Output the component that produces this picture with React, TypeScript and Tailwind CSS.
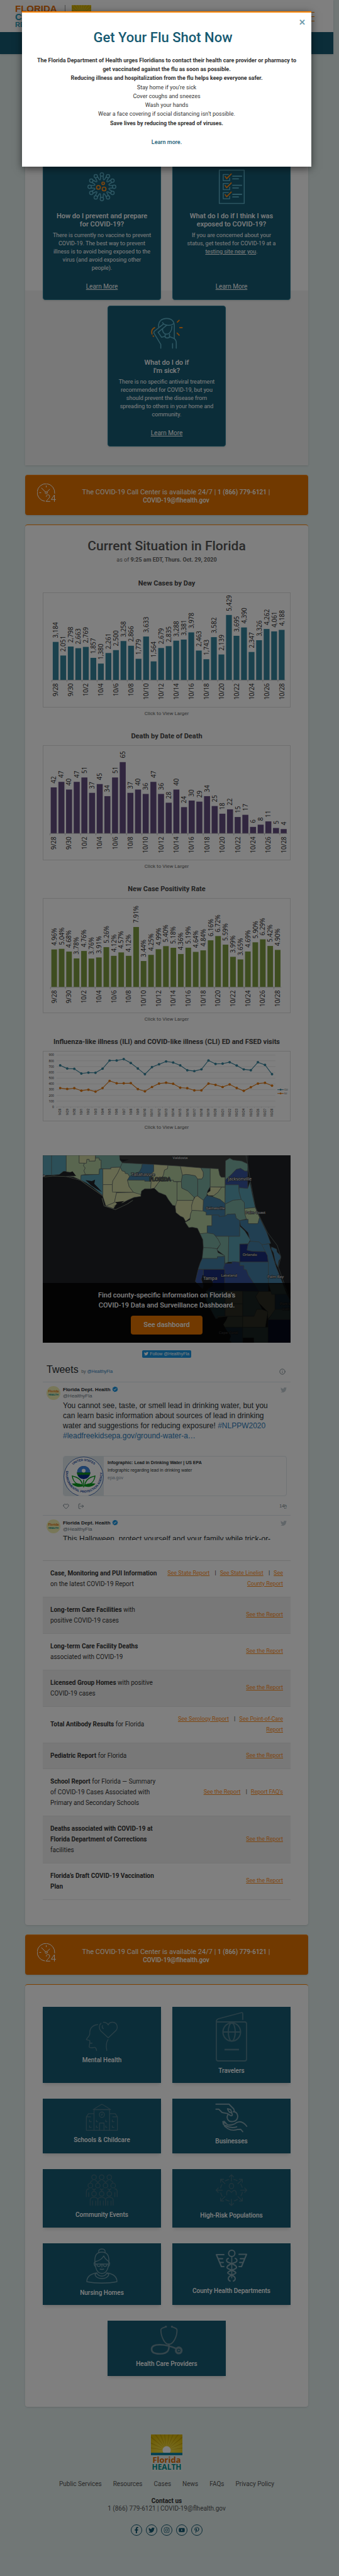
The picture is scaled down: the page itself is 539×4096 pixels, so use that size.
import React from 'react';
import { FaFacebookF, FaTwitter, FaInstagram, FaYoutube, FaPinterestP } from 'react-icons/fa';
import { MdVerified } from 'react-icons/md';
import { Heart, Info, LogOut } from 'lucide-react';

type IconProps = { box: string; className: string; children: React.ReactNode };

function Drawing({ box, className, children }: IconProps) {
  return (
    <svg
      viewBox={box}
      preserveAspectRatio="none"
      fill="none"
      stroke="currentColor"
      strokeLinecap="round"
      strokeLinejoin="round"
      aria-hidden="true"
      className={`block shrink-0 overflow-visible [&_*]:[vector-effect:non-scaling-stroke] ${className}`}
    >
      {children}
    </svg>
  );
}

function polar(angle: number, r: number) {
  const a = (angle * Math.PI) / 180;
  return `${(23 + r * Math.sin(a)).toFixed(2)} ${(23 - r * Math.cos(a)).toFixed(2)}`;
}

function VirusIcon() {
  const spokes = Array.from({ length: 12 }, (_, i) => i * 30);
  return (
    <Drawing box="0 0 46 46" className="h-[46px] w-[46px] text-[#5cb0c8]">
      {spokes.map((a) => {
        const c = polar(a, 19.5).split(' ');
        return (
          <g key={a} strokeWidth="1.5">
            <circle cx={c[0]} cy={c[1]} r="2.7" />
            <path d={`M${polar(a + 7, 17)} L${polar(a + 10, 12.5)} Q${polar(a + 15, 10.5)} ${polar(a + 20, 12.5)} L${polar(a + 23, 17)}`} />
          </g>
        );
      })}
      <g stroke="#ff8c1a" strokeWidth="1.7">
        <circle cx="25" cy="17.5" r="2" />
        <circle cx="17.5" cy="24" r="3" />
        <circle cx="26.5" cy="26.5" r="3" />
      </g>
    </Drawing>
  );
}

function ChecklistIcon() {
  return (
    <Drawing box="1012 60 119 270" className="h-[54px] w-[41px] text-[#5cb0c8]">
      <rect x="1014" y="63" width="115" height="264" strokeWidth="1.5" />
      {[0, 72, 144].map((d) => (
        <g key={d} strokeWidth="1.5">
          <path d={`M1056 ${97 + d}H1032V${146 + d}H1062V${126 + d}`} />
          <path d={`M1076 ${111 + d}H1117M1076 ${132 + d}H1102`} strokeWidth="1.8" />
          <path d={`M1041 ${113 + d}L1048 ${130 + d}L1069 ${93 + d}`} stroke="#ff8c1a" strokeWidth="1.8" />
        </g>
      ))}
    </Drawing>
  );
}

function SickIcon() {
  return (
    <Drawing box="699 1245 144 242" className="h-[48px] w-[50px] text-[#5cb0c8]">
      <g strokeWidth="1.6">
        <path d="M734 1315C732 1270 748 1247 771 1247C796 1247 807 1275 806 1310V1408" />
        <path d="M752 1280C760 1305 790 1310 803 1288" />
        <path d="M756 1292L714 1350L712 1362L744 1455V1486" />
        <path d="M772 1300L732 1358L748 1398L764 1390" />
        <path d="M752 1330C750 1390 795 1390 795 1310" />
        <path d="M764 1372V1394C764 1406 784 1406 784 1394V1372" />
        <path d="M784 1392L806 1408C813 1418 815 1425 815 1440V1486M798 1448V1485" />
      </g>
      <path d="M716 1320C702 1332 700 1350 704 1372M709 1387L711 1390M820 1276L828 1262M831 1321H842M819 1364L828 1381" stroke="#ff8c1a" strokeWidth="1.9" />
    </Drawing>
  );
}

function ClockIcon() {
  return (
    <svg viewBox="0 0 30 29" fill="none" stroke="#fff" strokeWidth="1" strokeLinecap="round" aria-hidden="true" className="block h-[29px] w-[30px] shrink-0">
      <path d="M28 15.5A14 14 0 1 0 12 28" />
      <path d="M14.5 3.5V5.5M4 14.5H6M7 7L13.4 13.4M20 9L15.6 13.3" />
      <circle cx="14.5" cy="14.5" r="1.7" />
      <path d="M14.5 20.5C14.5 16.8 20 16.8 20 20.3C20 23 16 25.5 14.3 28.3H20.5M27.5 28.5V18L22.5 25.3H29.5" />
    </svg>
  );
}

function MindIcon() {
  return (
    <Drawing box="397 20 148 172" className="h-[46px] w-[50px] text-[#527f8e]">
      <path strokeWidth="1.4" d="M451 36C425 40 413 60 414 90C414 105 398 118 398 124C400 130 411 126 414 132V146H425M414 146L411 168C413 178 428 172 438 171C444 174 445 182 446 190M500 125C488 145 491 170 494 190" />
      <path strokeWidth="1.4" d="M467 28C457 38 456 60 465 72L501 114L538 70C547 55 545 25 523 22C510 21 503 30 501 38C497 28 488 22 478 22M474 42C471 48 472 56 478 60" />
    </Drawing>
  );
}

function PassportIcon() {
  return (
    <Drawing box="0 0 50 79" className="h-[79px] w-[50px] text-[#527f8e]">
      <path strokeWidth="1.8" d="M43 12V3C43 1 42 1 40 1.5L4 11C2 12 1 13 1 15V75C1 77 2 78 4 78H46C48 78 49 77 49 75V19C49 17 48 16 46 16H1" />
      <g strokeWidth="2">
        <ellipse cx="25.5" cy="32" rx="14" ry="14.5" />
        <ellipse cx="25.5" cy="32" rx="5.5" ry="14.5" />
        <path d="M12 32H39" />
      </g>
      <path strokeWidth="2.6" strokeLinecap="butt" d="M14 60H37" />
    </Drawing>
  );
}

function SchoolIcon() {
  return (
    <Drawing box="397 512 148 158" className="h-[42px] w-[50px] text-[#4b7585]">
      <g strokeWidth="1.3">
        <path d="M398 668H544V587L534 568H508M398 668V587L408 568H433M398 587H418M544 587H522" />
        <path d="M434 668V544H507V668M430 543L466 515Q471 511 476 515L512 543Z" />
        <path d="M460 668V624H481V668" />
        <ellipse cx="471" cy="574" rx="12" ry="16" />
        <path d="M472 568V576H468M413 606V616H421M413 640V650H421M445 608V616H451M445 640V650H451M489 606V616H495M489 640V650H495M520 606V616H528M520 640V650H528" />
      </g>
    </Drawing>
  );
}

function BusinessIcon() {
  return (
    <Drawing box="998 504 147 170" className="h-[45px] w-[50px] text-[#7fa0ac]">
      <g strokeWidth="1.9">
        <path d="M999 507H1060L1082 535L1086 552M999 537H1012L1028 557L1052 563L1068 576C1078 578 1077 566 1070 558" />
        <path d="M1053 534L1068 540L1073 558C1060 560 1056 548 1053 534Z" />
        <path d="M1080 552C1098 552 1104 575 1099 592C1092 615 1064 618 1055 600C1051 592 1051 580 1054 572" />
        <path d="M1031 612L1040 640L1055 654C1068 664 1085 665 1100 659L1115 658L1124 672M1031 612L1038 610L1052 630C1065 636 1085 630 1095 618C1110 608 1128 614 1143 640M1042 634C1060 648 1080 650 1096 643M1034 628C1030 618 1034 614 1044 622" />
      </g>
    </Drawing>
  );
}

function CrowdIcon() {
  return (
    <Drawing box="397 930 148 183" className="h-[49px] w-[50px] text-[#3f6a7a]">
      <g strokeWidth="1.4">
        {[434, 470, 506].map((x) => (
          <g key={x}>
            <ellipse cx={x} cy="945" rx="11" ry="14" />
            <ellipse cx={x} cy="1043" rx="11" ry="14" />
            <path d={`M${x - 18} 1111V1080Q${x - 18} 1064 ${x} 1064Q${x + 18} 1064 ${x + 18} 1080V1111M${x - 7} 1086V1111M${x + 8} 1086V1111`} />
            <path d={`M${x - 17} 978Q${x - 15} 965 ${x - 6} 965M${x + 17} 978Q${x + 15} 965 ${x + 6} 965M${x - 8} 1014Q${x} 1016 ${x} 1026Q${x} 1016 ${x + 8} 1014`} />
          </g>
        ))}
        {[417, 452, 488, 524].map((x) => (
          <ellipse key={x} cx={x} cy="994" rx="11" ry="14" />
        ))}
        <path d="M410 1014Q398 1014 398 1030V1060M409 1036V1060M532 1014Q543 1014 543 1030V1060M532 1036V1060" />
      </g>
    </Drawing>
  );
}

function RiskIcon() {
  return (
    <svg viewBox="0 0 50 51" fill="none" stroke="currentColor" strokeWidth="1.4" strokeLinecap="round" strokeLinejoin="round" aria-hidden="true" className="block h-[51px] w-[50px] shrink-0 text-[#3f6a7a]">
      {[0, 45, 90, 135, 180, 225, 270, 315].map((a) => (
        <g key={a} transform={`rotate(${a} 25 25.5)`}>
          <path d="M25 11V1M21.5 4.5L25 1L28.5 4.5" />
          <path d="M28.5 8.2A17.6 17.6 0 0 1 34 10.4" />
        </g>
      ))}
      <ellipse cx="25" cy="19" rx="3.6" ry="4.2" />
      <path d="M17.5 33V30C17.5 27 19 25.8 21.5 26L25 29L28.5 26C31 25.8 32.5 27 32.5 30V33" />
    </svg>
  );
}

function ElderIcon() {
  return (
    <Drawing box="0 0 50 56" className="h-[56px] w-[50px] text-[#6d97a5]">
      <g strokeWidth="1.4">
        <path d="M20 7C19 3 21 1 25 1C29 1 31 3 30 7" />
        <path d="M14 23C13 12 16 6 25 6C34 6 37 12 36 23C35 34 31 40 25 40C19 40 15 34 14 23" />
        <path d="M15 21C20 20 25 17 28 12C30 17 33 19 36 21" />
        <path d="M14 22C12 22 12 27 15 29M36 22C38 22 38 27 35 29M15 25H35M17 25C17 30 23 30 23 25M27 25C27 30 33 30 33 25M25 25V30M22 33Q25 34 28 33" />
        <path d="M17 39C5 41 1 46 1 53C15 56 35 56 49 53C49 46 45 41 33 39M17 39L14 42C17 50 33 50 36 42L33 39M17 39C20 46 30 46 33 39" />
      </g>
    </Drawing>
  );
}

function CaduceusIcon() {
  return (
    <Drawing box="0 0 50 51" className="h-[51px] w-[50px] text-[#7fa0ac]">
      <g strokeWidth="2">
        <circle cx="25.5" cy="6" r="5" />
        <path d="M25.5 11V45" strokeWidth="1.6" />
        <path d="M13 8H1L9 27H13M4 14.5H11M6.5 20.5H12M37 7.5H49L41 27H37M46 14.5H39M43.5 20.5H38" />
        <path d="M20 14C17 15 16 18 19 20C24 22 34 24 33 29C31 32 20 33 19 37C20 40 31 40 31 46Q31 49 28 50M31 14C34 15 35 18 32 20C27 22 17 24 18 29C20 32 31 33 32 37C31 40 20 40 20 46Q20 49 23 50" />
      </g>
    </Drawing>
  );
}

function StethoscopeIcon() {
  return (
    <Drawing box="699 252 146 152" className="h-[46px] w-[50px] text-[#6a8c98]">
      <path strokeWidth="1.8" d="M768 258C752 264 745 266 745 275C746 310 762 350 782 350C803 350 820 310 820 275C820 266 812 264 797 258" />
      <path strokeWidth="3" d="M768 257H769M796 257H797" />
      <path strokeWidth="2.6" d="M782 350C785 375 782 400 740 400C712 400 702 390 702 375C702 355 722 352 740 352C770 352 795 362 816 372" />
      <ellipse cx="828" cy="382" rx="13" ry="15" strokeWidth="3.4" />
      <ellipse cx="828" cy="382" rx="3" ry="4" fill="currentColor" />
    </Drawing>
  );
}

function HealthLogo({ className }: { className: string }) {
  return (
    <svg viewBox="0 0 50 59" role="img" aria-label="Florida Health" className={className}>
      <defs>
        <clipPath id="sky">
          <rect width="50" height="29" />
        </clipPath>
        <radialGradient id="sun" cx="50%" cy="85%" r="90%">
          <stop offset="0" stopColor="#f5e04a" />
          <stop offset="1" stopColor="#d8b400" />
        </radialGradient>
      </defs>
      <rect width="50" height="59" fill="#f3f6ee" opacity="0.35" />
      <rect width="50" height="29" fill="url(#sun)" />
      <g clipPath="url(#sky)">
        {[-82, -66, -50, -36, -22, -8, 8, 22, 36, 50, 66, 82].map((a) => (
          <path key={a} d="M25 24L24 -20H26.5Z" fill="#b08d00" opacity="0.55" transform={`rotate(${a} 25 25)`} />
        ))}
        <circle cx="25" cy="25" r="6.5" fill="#fff" />
      </g>
      <rect y="29" width="50" height="4" fill="#1187a5" />
      <text x="25" y="44.5" textAnchor="middle" fontFamily="Open Sans, sans-serif" fontWeight="700" fontSize="13" fill="#e06a00">Florida</text>
      <text x="25" y="56" textAnchor="middle" fontFamily="Open Sans, sans-serif" fontWeight="700" fontSize="12" fill="#008c8c">HEALTH</text>
    </svg>
  );
}

const dates = ['9/28', '9/30', '10/2', '10/4', '10/6', '10/8', '10/10', '10/12', '10/14', '10/16', '10/18', '10/20', '10/22', '10/24', '10/26', '10/28'];

type BarChartProps = {
  label: string;
  values: number[];
  format: (v: number) => string;
  color: string;
  first: number;
  pitch: number;
  barWidth: number;
  base: number;
  unit: number;
};

function BarChart({ label, values, format, color, first, pitch, barWidth, base, unit }: BarChartProps) {
  const left = first - pitch / 2;
  return (
    <svg viewBox="0 0 394 182" role="img" aria-label={label} className="block h-auto w-full border border-[#dcdcdc]" fontFamily="Open Sans, sans-serif" fontSize="10" fill="#222">
      {values.map((v, i) => {
        const x = first + i * pitch;
        const h = v * unit;
        return (
          <g key={i}>
            <rect x={x - barWidth / 2} y={base - h} width={barWidth} height={h} fill={color} />
            <text transform={`translate(${x + 3.7} ${base - h - 6.2}) rotate(-90)`}>{format(v)}</text>
          </g>
        );
      })}
      <path d={`M${left} ${base}H${left + pitch * 31}`} stroke="#c4c4c4" strokeWidth="0.8" />
      {dates.map((d, i) => (
        <g key={d}>
          <path d={`M${left + i * 2 * pitch} ${base}v3`} stroke="#b8b8b8" strokeWidth="0.8" />
          <text textAnchor="end" transform={`translate(${first + i * 2 * pitch + 3.7} ${base + 5}) rotate(-90)`}>{d}</text>
        </g>
      ))}
    </svg>
  );
}

const cases = [3184, 2051, 2798, 2663, 2769, 1857, 1380, 2261, 2500, 3258, 2866, 1779, 3633, 1564, 2679, 2835, 3288, 3381, 3978, 2463, 1743, 3582, 2139, 5429, 3695, 4390, 2347, 3326, 4262, 4061, 4188];
const deaths = [42, 47, 40, 47, 51, 37, 45, 34, 51, 65, 37, 40, 36, 47, 36, 28, 40, 24, 30, 29, 34, 25, 18, 22, 15, 17, 6, 8, 11, 5, 4];
const positivity = [4.96, 5.04, 4.68, 3.78, 4.76, 3.76, 3.91, 5.26, 4.12, 4.57, 4.12, 7.91, 3.44, 4.25, 4.99, 5.4, 5.18, 4.36, 5.19, 4.64, 4.84, 6.16, 6.72, 5.59, 3.99, 3.65, 4.69, 5.9, 6.29, 5.42, 4.9];
const cli = [722, 666, 661, 580, 596, 594, 664, 805, 807, 831, 763, 668, 568, 691, 740, 789, 770, 722, 638, 622, 652, 807, 747, 752, 777, 719, 652, 638, 775, 731, 568];
const ili = [327, 311, 325, 283, 299, 265, 327, 452, 411, 411, 413, 309, 271, 346, 406, 420, 401, 334, 325, 288, 288, 406, 383, 346, 390, 329, 278, 343, 406, 418, 369];

function LineChart() {
  const x = (i: number) => 26.8 + i * 11.286;
  const y = (v: number) => 88.5 - v * 0.092;
  const series = [
    { name: 'CLI', data: cli, color: '#34829b', legend: 61 },
    { name: 'ILI', data: ili, color: '#e07812', legend: 67 },
  ];
  const days = ['9/28', '9/29', '9/30', ...Array.from({ length: 28 }, (_, i) => `10/${i + 1}`)];
  return (
    <svg viewBox="0 0 394 110" role="img" aria-label="CLI and ILI visits per day" className="block h-auto w-full border border-[#dcdcdc]" fontFamily="Open Sans, sans-serif" fontSize="5" fill="#222">
      {Array.from({ length: 10 }, (_, i) => i * 100).map((v) => (
        <g key={v}>
          <path d={`M21 ${y(v)}H371`} stroke="#dadada" strokeWidth="0.6" />
          <text x="17" y={y(v) + 1.8} textAnchor="end">{v}</text>
        </g>
      ))}
      {days.map((d, i) => (
        <g key={d}>
          <path d={`M${x(i) - 5.6} 88.5v1.5`} stroke="#c4c4c4" strokeWidth="0.5" />
          <text textAnchor="end" transform={`translate(${x(i) + 1.8} 91) rotate(-90)`}>{d}</text>
        </g>
      ))}
      {series.map((s) => (
        <g key={s.name}>
          <polyline points={s.data.map((v, i) => `${x(i)},${y(v)}`).join(' ')} fill="none" stroke={s.color} strokeWidth="1.1" />
          {s.data.map((v, i) => (
            <circle key={i} cx={x(i)} cy={y(v)} r="2" fill={s.color} />
          ))}
          <path d={`M374 ${s.legend}h10`} stroke={s.color} strokeWidth="1" />
          <circle cx="379" cy={s.legend} r="1.4" fill={s.color} />
          <text x="385" y={s.legend + 1.6} fontSize="4">{s.name}</text>
        </g>
      ))}
    </svg>
  );
}

const T = '#589eb0';
const G = '#b2cc9e';
const S = '#cfd4a0';
const A = '#7aaea0';
const B = '#427ea4';
const D = '#36529a';
const N = '#1a2c78';

const counties: [string, string][] = [
  [T, '197,152 238,152 238,290 215,290 197,299'],
  [T, '238,152 306,152 306,266 292,264 275,285 238,290'],
  [G, '306,152 366,152 366,206 390,207 386,225 394,240 388,260 395,285 375,290 373,325 340,303 306,298 345,296 340,275 306,266'],
  [S, '366,152 442,152 440,192 412,193 412,180 402,180 400,207 366,206'],
  [G, '402,180 412,180 412,193 440,192 442,170 458,170 460,185 468,185 468,245 460,247 458,285 395,285 388,260 394,240 386,225 390,207 400,207'],
  [A, '442,152 553,152 555,185 566,205 557,235 513,237 513,247 468,245 468,185 460,185 458,170 442,170'],
  [T, '375,290 458,285 460,247 476,247 476,432 430,375 400,345 373,325'],
  [S, '476,247 513,247 513,237 557,235 545,275 522,330 520,356 476,356'],
  [S, '476,356 520,356 520,400 540,412 535,440 530,480 515,490 490,505 476,440'],
  [S, '557,235 565,260 578,265 580,278 592,280 600,300 590,325 598,370 618,410 520,408 520,356 522,330 545,275'],
  [S, '540,412 618,410 640,418 652,425 652,438 620,445 590,465 568,482 540,490 525,522 490,505 515,490 530,480 535,440'],
  [A, '566,205 659,212 655,240 645,268 610,290 600,300 592,280 580,278 578,265 565,260 557,235'],
  [B, '659,212 712,216 712,265 705,275 700,333 670,333 670,326 590,325 600,300 610,290 645,268 655,240'],
  [G, '590,325 670,326 670,333 700,333 698,385 670,385 655,400 652,425 618,410 598,370'],
  [S, '712,216 778,222 776,245 762,255 757,290 735,340 715,380 698,385 700,333 705,275 712,265'],
  [G, '778,222 836,228 842,270 845,290 840,335 803,335 803,325 745,325 757,290 762,255 776,245'],
  [G, '735,340 745,325 803,325 803,335 820,337 820,505 800,500 780,460 768,430 735,410 715,382'],
  [G, '820,337 840,335 842,380 870,400 900,445 895,466 820,466'],
  [S, '836,228 931,240 942,270 942,300 935,317 916,318 905,295 880,288 862,285 845,290 842,270'],
  [A, '845,290 862,285 880,288 905,295 916,318 916,435 900,445 870,400 842,380 840,335'],
  [A, '931,240 974,243 974,370 962,400 958,432 942,465 916,435 916,318 935,317 942,300 942,270'],
  [G, '974,243 1012,246 1018,290 1025,305 1043,305 1043,372 974,372'],
  [S, '974,372 1027,374 1010,410 990,433 965,432 958,418 974,400'],
  [G, '1027,374 1043,374 1043,488 1020,460 985,440 990,433 1010,410'],
  [A, '1045,190 1065,172 1080,185 1120,192 1148,212 1148,262 1135,262 1115,243 1095,250 1070,290 1044,325'],
  [D, '1044,325 1070,290 1095,250 1115,243 1135,262 1148,262 1148,383 1108,378 1106,358 1044,358'],
  [T, '1044,358 1106,358 1108,405 1118,460 1080,465 1043,492'],
  [T, '1108,378 1148,383 1158,340 1170,430 1183,515 1133,523 1132,480 1118,460 1108,405'],
  [A, '1043,492 1080,465 1118,460 1132,480 1133,523 1135,560 1142,595 1111,606 1095,590 1090,560 1055,562 1043,575'],
  [B, '942,465 958,432 985,440 1020,460 1043,488 1043,575 1015,580 1015,568 955,568 955,548 940,548'],
  [S, '820,466 895,466 888,500 890,535 883,560 880,590 860,612 850,585 835,575 815,550 812,510'],
  [S, '895,466 905,440 915,435 942,465 940,540 888,535 888,500'],
  [G, '890,535 940,540 955,548 955,568 982,568 982,643 960,643 960,695 927,698 915,660 890,652 875,655 858,618 880,600 883,560'],
  [B, '982,568 1015,568 1015,580 1043,575 1055,562 1090,560 1095,590 1111,606 1111,716 1000,716 990,700 960,693 960,643 982,643'],
  [G, '1133,523 1183,515 1203,585 1195,628 1150,628 1150,600 1142,595 1135,560'],
  [B, '1111,606 1150,598 1150,628 1195,628 1203,585 1235,685 1255,765 1215,775 1200,755 1160,750 1150,690 1115,640'],
  [A, '927,698 960,693 990,700 1010,735 1022,770 1005,803 980,797 942,795 940,740'],
  [A, '1000,716 1060,716 1058,895 1043,905 1040,850 1005,810 1022,770 1010,735'],
  [A, '942,795 980,797 1005,803 1010,830 1041,850 1041,856 1007,858 1007,870 937,870'],
  [B, '937,870 1007,870 1007,858 1041,856 1041,945 918,945 928,900'],
  [T, '1060,716 1111,716 1111,645 1135,680 1160,740 1150,768 1111,770 1111,895 1058,895'],
  [N, '1111,770 1150,770 1145,812 1170,820 1230,822 1240,850 1243,895 1111,895'],
  [B, '1160,750 1200,755 1213,770 1230,822 1170,820 1145,812 1150,770'],
  [B, '1213,775 1247,768 1280,930 1310,1040 1325,1090 1244,1046 1244,895 1240,850 1230,822'],
  [B, '1258,790 1282,805 1284,825 1300,850 1300,870 1292,885 1288,930 1278,900 1268,830 1258,805'],
  [B, '1111,895 1244,895 1244,1100 1200,1100 1170,1030 1150,985 1142,950 1130,945 1130,920 1111,920'],
  [D, '1043,905 1075,905 1075,892 1090,892 1111,897 1111,920 1130,920 1130,945 1142,950 1150,985 1170,1030 1200,1100 1041,1096 1041,945 1035,940'],
  [N, '942,947 1041,947 1041,1096 960,1096 985,1040 975,1020 942,1000'],
  [D, '918,947 942,947 942,1000 932,1010 942,1060 938,1080 905,1030'],
  [T, '955,1096 1043,1096 1043,1273 1000,1290 985,1250 955,1160'],
  [S, '1043,1096 1125,1098 1125,1186 1043,1186'],
  [S, '1043,1186 1125,1186 1125,1273 1043,1273'],
  [A, '1125,1098 1200,1100 1185,1135 1200,1180 1215,1225 1190,1225 1190,1250 1177,1273 1125,1273'],
  [S, '1200,1100 1258,1100 1275,1120 1275,1240 1242,1290 1240,1240 1200,1180 1185,1135'],
  [A, '1244,1046 1310,1046 1330,1120 1260,1120'],
  [B, '1275,1120 1330,1120 1347,1170 1347,1225 1275,1225'],
  [A, '1275,1225 1347,1225 1347,1297 1242,1297'],
  [N, '1242,1297 1347,1297 1347,1458 1242,1458'],
  [G, '1005,1273 1125,1273 1125,1349 1030,1349 1020,1300'],
  [S, '1125,1273 1177,1273 1190,1225 1215,1225 1242,1240 1230,1349 1125,1349'],
  [B, '1038,1349 1125,1349 1125,1458 1075,1458 1040,1400'],
  [A, '1125,1349 1242,1349 1242,1458 1177,1458 1177,1422 1125,1422'],
];

const places: [string, number, number, number][] = [
  ['Valdosta', 219, 6, 6],
  ['Tallahassee', 160, 33, 7],
  ['Jacksonville', 314, 40, 7],
  ['Gainesville', 275, 86, 6],
  ['Palm Coast', 339, 93, 6],
  ['Orlando', 330, 160, 6],
  ['Lakeland', 297, 193, 6],
  ['Tampa', 267, 199, 7],
  ['Palm Bay', 371, 196, 6],
  ['Cape Coral', 296, 285, 6],
];

function FloridaMap() {
  return (
    <svg viewBox="0 0 395 299" role="img" aria-label="Map of Florida counties" className="block h-auto w-full">
      <rect width="395" height="299" fill="#1f2125" />
      <g transform="scale(0.3435 0.229) translate(-197 -152)" strokeLinejoin="round">
        <polygon points="553,152 1152,152 1148,215 1120,192 1080,185 1065,172 1045,190 1044,305 1020,305 1012,246 566,205" fill="#383b3b" />
        <g stroke="#5f6a66" strokeWidth="2.4">
          {counties.map(([fill, points]) => (
            <polygon key={points} points={points} fill={fill} />
          ))}
        </g>
        <g fill="#1f2125">
          <path d="M270 290L300 262L315 276L335 264L352 296L325 288L305 296Z" />
          <path d="M395 325L425 332L440 322L436 350L455 380L472 408L445 385L420 360L410 345Z" />
          <path d="M556 180L598 180L570 196Z" />
          <path d="M532 478L575 470L555 492L520 510L545 492Z" />
          <path d="M938 985L958 1005L985 1030L985 1060L960 1088L930 1120L945 1060L935 1015Z" />
          <path d="M1010 1280L1055 1275L1048 1300L1035 1330L1050 1370L1070 1410L1060 1458L1030 1430L1012 1330Z" />
        </g>
        <path d="M1140 152L1148 212L1160 330L1183 510L1210 600L1240 690L1285 780L1302 860L1290 930L1347 1170" fill="none" stroke="#55605f" strokeWidth="3" />
        <path d="M197 304L250 296L306 300L373 327L476 435M472 450L482 505L535 530L590 490L615 465" fill="none" stroke="#8a9480" strokeWidth="3" />
      </g>
      <g fontFamily="Noto Sans, sans-serif" textAnchor="middle" fill="#e6e6e6" stroke="#2b2e30" strokeWidth="1.2" paintOrder="stroke">
        <text x="0" y="34" fontSize="6" textAnchor="start">a</text>
        <text x="187" y="41" fontSize="8" fill="#66706c" fontWeight="600">FLORIDA</text>
        {places.map(([name, x, y, size]) => (
          <text key={name} x={x} y={y} fontSize={size}>{name}</text>
        ))}
        <text x="378" y="239" fontSize="6" textAnchor="start">Port S</text>
        <text x="382" y="247" fontSize="6" textAnchor="start">Luci</text>
      </g>
    </svg>
  );
}

function EpaSeal() {
  return (
    <svg viewBox="0 0 64 64" role="img" aria-label="EPA seal" className="block h-16 w-16 shrink-0 bg-[#e1e8ed]">
      <defs>
        <path id="ring-top" d="M9 17.5A27.5 27.5 0 0 1 55 17.5" />
        <path id="ring-bottom" d="M6 17A29 29 0 1 0 60 19" />
      </defs>
      <circle cx="32" cy="32" r="31.3" fill="#fff" stroke="#1b4ba0" strokeWidth="0.8" />
      <g fontFamily="Liberation Sans, sans-serif" fontWeight="700" fontSize="5" fill="#1b4ba0">
        <text textAnchor="middle"><textPath href="#ring-top" startOffset="50%"><tspan dy="2">UNITED STATES</tspan></textPath></text>
        <text textAnchor="middle"><textPath href="#ring-bottom" startOffset="50%">ENVIRONMENTAL PROTECTION AGENCY</textPath></text>
      </g>
      <circle cx="32" cy="25.5" r="10.5" fill="#0a2f8a" />
      <path d="M21.5 25.5A10.5 10.5 0 0 1 42.5 25.5Z" fill="#3f86dd" />
      <path d="M21.5 25.5H42.5V28Q40.7 31 38.9 28Q37.2 31 35.5 28Q33.7 31 32 28Q30.3 31 28.5 28Q26.8 31 25 28Q23.3 31 21.5 28Z" fill="#12901f" />
      <circle cx="32" cy="22.5" r="3" fill="#fff" />
      <path d="M32 49V37M14 31C24 33 29 38 30 45C21 45 15 40 14 31ZM50 31C40 33 35 38 34 45C43 45 49 40 50 31Z" fill="none" stroke="#0a9a1e" strokeWidth="1.5" />
      <path d="M13 43C20 42 28 42 32 47C36 42 44 42 51 43C46 49 37 49 32 47C27 49 18 49 13 43Z" fill="#0a9a1e" />
    </svg>
  );
}

function InfoCard({ icon, title, children }: { icon: React.ReactNode; title: [string, string]; children: React.ReactNode }) {
  return (
    <article className="flex h-56 flex-col items-center rounded-sm border border-[#2b7c95] bg-[#165a72] px-5 text-center text-white shadow">
      <div className="mt-[15px] flex h-[56px] items-center justify-center">{icon}</div>
      <h3 className="mt-3 text-[11px] leading-[13px] font-medium whitespace-nowrap">
        {title[0]}
        <br />
        {title[1]}
      </h3>
      <div className="mt-[5px] text-[9px] leading-[13px] whitespace-nowrap">{children}</div>
      <a href="#" className="mt-auto mb-[13px] text-[10px] leading-[14px] underline">Learn More</a>
    </article>
  );
}

function CallBanner() {
  return (
    <aside className="mx-10 mt-[15px] flex h-16 items-start gap-0 rounded-sm border-t border-[#ff8200] bg-[#e27300] px-[19px] text-white shadow">
      <div className="mt-[13px]">
        <ClockIcon />
      </div>
      <p className="mt-5 flex-1 text-center text-[11px] leading-[13px]">
        The COVID-19 Call Center is available 24/7 | <a href="tel:18667796121" className="text-[10px] font-medium">1 (866) 779-6121</a> |
        <br />
        <a href="mailto:COVID-19@flhealth.gov" className="text-[10px] font-medium">COVID-19@flhealth.gov</a>
      </p>
    </aside>
  );
}

function Figure({ title, children }: { title: string; children: React.ReactNode }) {
  return (
    <figure className="mb-[22px] text-center">
      <h3 className="text-[11px] leading-4 font-bold whitespace-nowrap text-[#444]">{title}</h3>
      <a href="#" className="mt-1.5 block">{children}</a>
      <figcaption className="mt-1 text-[8px] leading-3 text-[#666]">Click to View Larger</figcaption>
    </figure>
  );
}

function TweetHead() {
  return (
    <header className="flex items-start">
      <div className="flex h-[22px] w-[22px] shrink-0 flex-col items-center justify-center rounded-full bg-[#f0eeb0] text-[5px] leading-[5px] font-bold">
        <span className="text-[#e06a00]">Florida</span>
        <span className="text-[4px] text-[#008c8c]">HEALTH</span>
      </div>
      <div className="ml-1 flex-1">
        <div className="flex items-center gap-0.5 text-[8px] leading-[11px] font-bold text-[#292f33]">
          Florida Dept. Health
          <MdVerified className="h-[10px] w-[10px] text-[#1b95e0]" />
        </div>
        <div className="text-[8px] leading-[10px] text-[#697882]">@HealthyFla</div>
      </div>
      <FaTwitter className="mt-px h-[10px] w-[10px] text-[#c3ccd3]" />
    </header>
  );
}

function Report({ children, links, shaded }: { children: React.ReactNode; links: string[]; shaded?: boolean }) {
  return (
    <tr className={shaded ? 'border-b border-[#e6e6e6] bg-[#f1f1f1]' : 'border-b border-[#e6e6e6]'}>
      <th scope="row" className="w-1/2 pt-[11px] pr-0 pb-3 pl-3 text-left align-middle text-[10px] leading-[17px] font-normal text-[#333] [&_b]:font-bold">
        {children}
      </th>
      <td className="pt-[11px] pr-3 pb-3 text-right align-middle text-[9px] leading-[17px]">
        {links.map((text, i) => (
          <React.Fragment key={text}>
            {i > 0 && <span className="mx-1.5 text-[#333]">|</span>}
            <a href="#" className="text-[#ff8c1a] underline">{text}</a>
            {i < links.length - 1 ? ' ' : ''}
          </React.Fragment>
        ))}
      </td>
    </tr>
  );
}

function Tile({ icon, label }: { icon: React.ReactNode; label: string }) {
  return (
    <a href="#" className="flex flex-col items-center justify-center bg-[#165a72] pt-2 pb-3 text-white shadow-md">
      {icon}
      <span className="mt-2 text-[10px] leading-[14px] font-medium">{label}</span>
    </a>
  );
}

export default function App() {
  const socials = [
    { name: 'Facebook', Icon: FaFacebookF },
    { name: 'Twitter', Icon: FaTwitter },
    { name: 'Instagram', Icon: FaInstagram },
    { name: 'YouTube', Icon: FaYoutube },
    { name: 'Pinterest', Icon: FaPinterestP },
  ];
  return (
    <div className="relative min-h-screen bg-[#e2eeed] pr-[9px] font-[Roboto,sans-serif] text-[#333]">
      <header>
        <div className="flex h-[51px] items-start bg-white pt-2 pl-6 shadow-sm">
          <div className="h-9 border-r border-[#999] pr-[10px] font-['Liberation_Sans',sans-serif] leading-none font-bold">
            <div className="text-[15px] leading-3 text-[#e8720c]">FLORIDA</div>
            <div className="text-[15px] leading-[14px] text-[#2e9cb8]">COVID-19</div>
            <div className="text-[11px] leading-[10px] text-[#2e9cb8]">RESPONSE</div>
          </div>
          <HealthLogo className="ml-[10px] block h-[37px] w-[31px]" />
          <button aria-label="Menu" className="mt-[11px] mr-[30px] ml-auto flex w-[22px] flex-col gap-1.5">
            <span className="h-px w-full bg-[#ff8200]" />
            <span className="h-px w-full bg-[#ff8200]" />
            <span className="h-px w-full bg-[#ff8200]" />
          </button>
        </div>
        <div className="h-[35px] bg-[#165a72] shadow" />
      </header>

      <section className="mx-10 mt-[15px] bg-[linear-gradient(#fff_361px,#f2f2f2_361px)] px-7 pt-[152px] pb-[30px] shadow">
        <div className="grid grid-cols-2 gap-[18px]">
          <InfoCard icon={<VirusIcon />} title={['How do I prevent and prepare', 'for COVID-19?']}>
            There is currently no vaccine to prevent
            <br />
            COVID-19. The best way to prevent
            <br />
            illness is to avoid being exposed to the
            <br />
            virus (and avoid exposing other
            <br />
            people).
          </InfoCard>
          <InfoCard icon={<ChecklistIcon />} title={['What do I do if I think I was', 'exposed to COVID-19?']}>
            If you are concerned about your
            <br />
            status, get tested for COVID-19 at a
            <br />
            <a href="#" className="underline">testing site near you</a>.
          </InfoCard>
        </div>
        <div className="mx-auto mt-[9px] w-[188px]">
          <InfoCard icon={<SickIcon />} title={['What do I do if', "I'm sick?"]}>
            There is no specific antiviral treatment
            <br />
            recommended for COVID-19, but you
            <br />
            should prevent the disease from
            <br />
            spreading to others in your home and
            <br />
            community.
          </InfoCard>
        </div>
      </section>

      <CallBanner />

      <section className="mx-10 mt-[15px] rounded-sm border-t border-[#ff8200] bg-white px-7 pt-[21px] pb-10 shadow">
        <h2 className="text-center text-[21px] leading-6 font-medium text-[#555]">Current Situation in Florida</h2>
        <p className="mt-1 mb-6 text-center text-[9px] leading-3 text-[#666]">
          as of <b className="font-bold">9:25 am EDT, Thurs. Oct. 29, 2020</b>
        </p>
        <Figure title="New Cases by Day">
          <BarChart label="New cases by day" values={cases} format={(v) => v.toLocaleString('en-US')} color="#34829b" first={19.6} pitch={12.04} barWidth={9.3} base={139.2} unit={0.01919} />
        </Figure>
        <Figure title="Death by Date of Death">
          <BarChart label="Deaths by date of death" values={deaths} format={(v) => String(v)} color="#624c7e" first={16.5} pitch={12.25} barWidth={9.6} base={140} unit={1.755} />
        </Figure>
        <Figure title="New Case Positivity Rate">
          <BarChart label="New case positivity rate" values={positivity} format={(v) => `${v.toFixed(2)}%`} color="#7c9a40" first={17.2} pitch={11.907} barWidth={9} base={141.4} unit={12.16} />
        </Figure>
        <Figure title="Influenza-like illness (ILI) and COVID-like illness (CLI) ED and FSED visits">
          <LineChart />
        </Figure>

        <div className="relative mt-[38px]">
          <FloridaMap />
          <div className="absolute inset-x-0 bottom-0 flex h-[95px] flex-col items-center bg-black/80 pt-3 text-center text-white">
            <p className="text-[11px] leading-4 font-medium">
              Find county-specific information on Florida’s
              <br />
              COVID-19 Data and Surveillance Dashboard.
            </p>
            <a href="#" className="mt-2 flex h-[30px] items-center rounded-sm bg-[#e27300] px-5 text-[11px] font-medium">See dashboard</a>
          </div>
        </div>

        <div className="font-['Liberation_Sans',sans-serif]">
          <a href="#" className="mx-auto mt-3 flex h-3 w-[78px] items-center justify-center gap-0.5 rounded-[2px] bg-[#1b95e0] text-[7px] leading-3 whitespace-nowrap text-white">
            <FaTwitter className="h-[7px] w-[7px]" />
            Follow @HealthyFla
          </a>
          <div className="mt-2 flex items-center px-1.5 pb-1.5">
            <h3 className="text-[16px] leading-[21px] text-[#292f33]">
              Tweets <small className="text-[7px] text-[#697882]">by <a href="#" className="text-[#2b7bb9]">@HealthyFla</a></small>
            </h3>
            <Info className="mt-1 mr-0.5 ml-auto h-[10px] w-[10px] text-[#697882]" />
          </div>
          <div className="h-[252px] overflow-hidden">
            <article className="border-t border-[#e1e8ed] px-1.5 pt-1.5 pb-[9px]">
              <TweetHead />
              <div className="ml-[26px]">
                <p className="mt-px text-[12px] leading-4 text-[#292f33]">
                  You cannot see, taste, or smell lead in drinking water, but you
                  <br />
                  can learn basic information about sources of lead in drinking
                  <br />
                  water and suggestions for reducing exposure! <a href="#" className="text-[#2b7bb9]">#NLPPW2020</a>
                  <br />
                  <a href="#" className="text-[#2b7bb9]">#leadfreekids</a><a href="#" className="text-[#2b7bb9]">epa.gov/ground-water-a…</a>
                </p>
                <a href="#" className="mt-6 flex h-16 overflow-hidden rounded border border-[#e1e8ed]">
                  <EpaSeal />
                  <div className="pt-1 pl-1.5 text-[7px] leading-3">
                    <div className="font-bold text-[#292f33]">Infographic: Lead in Drinking Water | US EPA</div>
                    <div className="text-[#292f33]">Infographic regarding lead in drinking water</div>
                    <div className="text-[#8899a6]">epa.gov</div>
                  </div>
                </a>
                <div className="mt-[11px] flex h-[10px] items-center text-[#697882]">
                  <button aria-label="Like"><Heart className="h-[10px] w-[10px]" /></button>
                  <button aria-label="Share" className="ml-[14px]"><LogOut className="h-[10px] w-[10px]" /></button>
                  <time className="ml-auto text-[7px]">14<abbr title="hours" className="underline decoration-dotted">h</abbr></time>
                </div>
              </div>
            </article>
            <article className="border-t border-[#e1e8ed] px-1.5 pt-1.5">
              <TweetHead />
              <p className="mt-px ml-[26px] text-[12px] leading-4 whitespace-nowrap text-[#292f33]">This Halloween, protect yourself and your family while trick-or-</p>
            </article>
          </div>
        </div>

        <table className="mt-8 w-full table-fixed border-collapse border-t border-[#e0e0e0]">
          <tbody>
            <Report links={['See State Report', 'See State Linelist', 'See County Report']}>
              <b>Case, Monitoring and PUI Information</b>
              <br />
              on the latest COVID-19 Report
            </Report>
            <Report shaded links={['See the Report']}>
              <b>Long-term Care Facilities</b> with<br />positive COVID-19 cases
            </Report>
            <Report links={['See the Report']}>
              <b>Long-term Care Facility Deaths</b><br />associated with COVID-19
            </Report>
            <Report shaded links={['See the Report']}>
              <b>Licensed Group Homes</b> with positive<br />COVID-19 cases
            </Report>
            <Report links={['See Serology Report', 'See Point-of-Care Report']}>
              <b>Total Antibody Results</b> for Florida
            </Report>
            <Report shaded links={['See the Report']}>
              <b>Pediatric Report</b> for Florida
            </Report>
            <Report links={['See the Report', 'Report FAQ’s']}>
              <b>School Report</b> for Florida — Summary<br />of COVID-19 Cases Associated with<br />Primary and Secondary Schools
            </Report>
            <Report shaded links={['See the Report']}>
              <b>Deaths associated with COVID-19 at<br />Florida Department of Corrections</b><br />facilities
            </Report>
            <Report links={['See the Report']}>
              <b>Florida’s Draft COVID-19 Vaccination<br />Plan</b>
            </Report>
          </tbody>
        </table>
      </section>

      <CallBanner />

      <section className="mx-10 mt-[15px] rounded-sm border-t border-[#ff8200] bg-white px-7 pt-[35px] pb-[49px] shadow">
        <div className="grid grid-cols-2 gap-x-[18px] gap-y-[25px]">
          <Tile icon={<MindIcon />} label="Mental Health" />
          <Tile icon={<PassportIcon />} label="Travelers" />
          <Tile icon={<SchoolIcon />} label="Schools & Childcare" />
          <Tile icon={<BusinessIcon />} label="Businesses" />
          <Tile icon={<CrowdIcon />} label="Community Events" />
          <Tile icon={<RiskIcon />} label="High-Risk Populations" />
          <Tile icon={<ElderIcon />} label="Nursing Homes" />
          <Tile icon={<CaduceusIcon />} label="County Health Departments" />
        </div>
        <div className="mx-auto mt-[25px] w-[188px]">
          <Tile icon={<StethoscopeIcon />} label="Health Care Providers" />
        </div>
      </section>

      <footer className="flex flex-col items-center pt-[44px] pb-16 text-[10px]">
        <HealthLogo className="block h-[59px] w-[50px]" />
        <nav className="mt-[13px] flex gap-[18px] leading-[14px] text-[#555]">
          {['Public Services', 'Resources', 'Cases', 'News', 'FAQs', 'Privacy Policy'].map((item) => (
            <a key={item} href="#">{item}</a>
          ))}
        </nav>
        <div className="mt-[14px] text-center leading-3">
          <b className="font-bold">Contact us</b>
          <p className="text-[#555]">1 (866) 779-6121 | COVID-19@flhealth.gov</p>
        </div>
        <div className="mt-[19px] flex gap-1.5">
          {socials.map(({ name, Icon }) => (
            <a key={name} href="#" aria-label={name} className="flex h-[18px] w-[18px] items-center justify-center rounded-full border border-[#165a72] text-[#165a72]">
              <Icon className="h-[10px] w-[10px]" />
            </a>
          ))}
        </div>
      </footer>

      <div className="absolute inset-0 bg-black/50" />

      <div role="dialog" aria-labelledby="notice-title" className="absolute top-[18px] right-11 left-[35px] h-[247px] border-t-2 border-[#ff8200] bg-white text-center shadow-[0_3px_12px_rgba(0,0,0,0.55)]">
        <button aria-label="Close" className="absolute top-2 right-[9px] text-[13px] leading-4 font-bold text-[#6f9cad]">✕</button>
        <h1 id="notice-title" className="mt-[26px] pr-3 text-[22px] leading-7 font-medium text-[#165a72]">Get Your Flu Shot Now</h1>
        <div className="mt-[15px] text-[9px] leading-[14px] whitespace-nowrap text-[#333]">
          <p className="font-bold">
            The Florida Department of Health urges Floridians to contact their health care provider or pharmacy to
            <br />
            get vaccinated against the flu as soon as possible.
            <br />
            Reducing illness and hospitalization from the flu helps keep everyone safer.
          </p>
          <ul className="my-px">
            <li>Stay home if you’re sick</li>
            <li>Cover coughs and sneezes</li>
            <li>Wash your hands</li>
            <li>Wear a face covering if social distancing isn’t possible.</li>
          </ul>
          <p className="font-bold">Save lives by reducing the spread of viruses.</p>
        </div>
        <a href="#" className="mt-4 inline-block text-[9px] leading-[14px] font-medium text-[#165a72]">Learn more.</a>
      </div>
    </div>
  );
}
